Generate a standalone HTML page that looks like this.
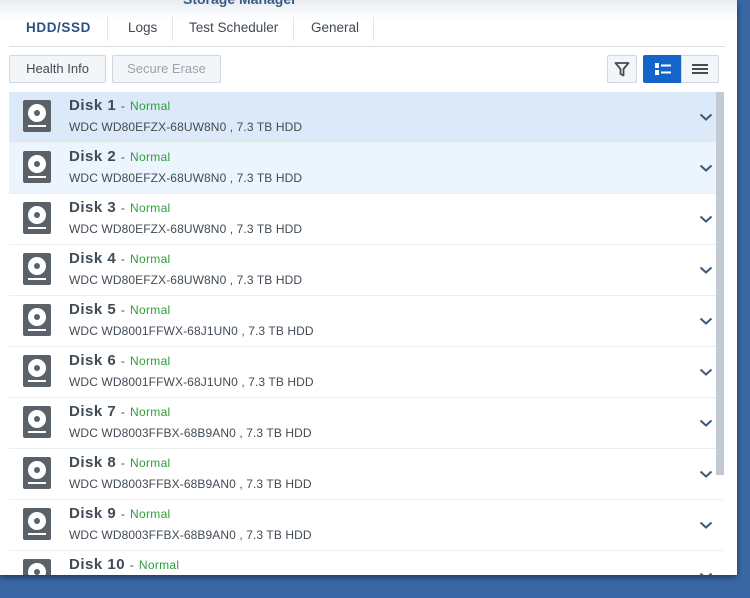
<!DOCTYPE html>
<html><head><style>
*{margin:0;padding:0;box-sizing:border-box}
body{width:750px;height:598px;background:#3a68a6;font-family:"Liberation Sans",Arial,sans-serif;position:relative;overflow:hidden}
.win{position:absolute;left:0;top:0;width:737px;height:575px;background:#fff;box-shadow:0 2px 6px rgba(0,0,0,.5);overflow:hidden}
.title{position:absolute;left:0;top:0;width:737px;height:20px;background:linear-gradient(#e8edf3,#fff)}
.title span{position:absolute;left:183px;top:-9px;font-size:14px;font-weight:bold;color:#3a5a80}
.tabs{position:absolute;left:9px;top:12px;width:716px;height:35px;border-bottom:1px solid #dde1e6}
.tab{position:absolute;top:8px;font-size:13.5px;color:#404852}
.sep{position:absolute;top:5px;width:1px;height:24px;background:#e2e5e9}
.btn{position:absolute;top:55px;height:28px;border:1px solid #cfd6de;border-radius:2px;background:#f3f6f9;font-size:13px;color:#414b55;text-align:center;line-height:26px}
.row{position:absolute;left:9px;width:714px;height:51px;border-bottom:1px solid #eceff2}
.ic{position:absolute;left:14px;top:8px;width:28px;height:32px;background:#5b6168;border-radius:2px}
.ic .c{position:absolute;left:5px;top:4px;width:18px;height:18px;border-radius:50%;background:#fff}
.ic .c:after{content:"";position:absolute;left:6px;top:6px;width:6px;height:6px;border-radius:50%;background:#5b6168}
.ic .l{position:absolute;left:5px;top:25px;width:18px;height:2px;background:#fff}
.t{position:absolute;left:60px;top:5px;font-size:15px;font-weight:bold;color:#414b55;letter-spacing:0.5px}
.t small{font-size:12px;font-weight:normal;color:#414b55}
.t i{font-style:normal;font-size:12px;font-weight:normal;color:#2e9e3a;letter-spacing:0.3px}
.s{position:absolute;left:60px;top:28px;font-size:12px;color:#414b55;letter-spacing:0.1px}
.ch{position:absolute;left:690px;top:20px}
.sb{position:absolute;left:716px;top:92px;width:8px;height:383px;background:#c3cad3}
</style></head><body>
<div class="win">
<div class="title"><span>Storage Manager</span></div>
<div class="tabs">
<div class="tab" style="left:17px;font-weight:bold;color:#2a5180;letter-spacing:0.6px">HDD/SSD</div>
<div class="sep" style="left:98px"></div>
<div class="tab" style="left:119px">Logs</div>
<div class="sep" style="left:163px"></div>
<div class="tab" style="left:180px">Test Scheduler</div>
<div class="sep" style="left:284px"></div>
<div class="tab" style="left:302px">General</div>
<div class="sep" style="left:364px"></div>
</div>
<div class="btn" style="left:9px;width:97px">Health Info</div>
<div class="btn" style="left:112px;width:109px;color:#9aa3ad">Secure Erase</div>
<div class="btn" style="left:607px;width:30px"><svg width="16" height="16" viewBox="0 0 16 16" style="margin-top:5px"><path d="M1.5 2h13L9.5 8v6.5l-3-1.5V8z" fill="none" stroke="#444b52" stroke-width="1.8" stroke-linejoin="round"/></svg></div>
<div class="btn" style="left:643px;width:39px;background:#1565c8;border-color:#1565c8;border-radius:2px 0 0 2px"><svg width="18" height="14" viewBox="0 0 18 14" style="margin-top:6px"><rect x="1" y="1" width="4" height="5" fill="#fff"/><rect x="1" y="8" width="4" height="5" fill="#fff"/><rect x="7" y="2.5" width="10" height="2" fill="#fff"/><rect x="7" y="9.5" width="10" height="2" fill="#fff"/></svg></div>
<div class="btn" style="left:681px;width:38px;border-radius:0 2px 2px 0"><svg width="16" height="12" viewBox="0 0 16 12" style="margin-top:7px"><rect x="0" y="1" width="16" height="2" fill="#444b52"/><rect x="0" y="5" width="16" height="2" fill="#444b52"/><rect x="0" y="9" width="16" height="2" fill="#444b52"/></svg></div>

<div class="row" style="top:92px;background:#dce9f8"><div class="ic"><div class="c"></div><div class="l"></div></div><div class="t">Disk 1 <small>-</small> <i>Normal</i></div><div class="s">WDC WD80EFZX-68UW8N0 , 7.3 TB HDD</div><svg class="ch" width="14" height="10"><path d="M1.5 2.5l5.5 5 5.5-5" fill="none" stroke="#3f587a" stroke-width="2"/></svg></div>
<div class="row" style="top:143px;background:#ecf4fd"><div class="ic"><div class="c"></div><div class="l"></div></div><div class="t">Disk 2 <small>-</small> <i>Normal</i></div><div class="s">WDC WD80EFZX-68UW8N0 , 7.3 TB HDD</div><svg class="ch" width="14" height="10"><path d="M1.5 2.5l5.5 5 5.5-5" fill="none" stroke="#3f587a" stroke-width="2"/></svg></div>
<div class="row" style="top:194px"><div class="ic"><div class="c"></div><div class="l"></div></div><div class="t">Disk 3 <small>-</small> <i>Normal</i></div><div class="s">WDC WD80EFZX-68UW8N0 , 7.3 TB HDD</div><svg class="ch" width="14" height="10"><path d="M1.5 2.5l5.5 5 5.5-5" fill="none" stroke="#3f587a" stroke-width="2"/></svg></div>
<div class="row" style="top:245px"><div class="ic"><div class="c"></div><div class="l"></div></div><div class="t">Disk 4 <small>-</small> <i>Normal</i></div><div class="s">WDC WD80EFZX-68UW8N0 , 7.3 TB HDD</div><svg class="ch" width="14" height="10"><path d="M1.5 2.5l5.5 5 5.5-5" fill="none" stroke="#3f587a" stroke-width="2"/></svg></div>
<div class="row" style="top:296px"><div class="ic"><div class="c"></div><div class="l"></div></div><div class="t">Disk 5 <small>-</small> <i>Normal</i></div><div class="s">WDC WD8001FFWX-68J1UN0 , 7.3 TB HDD</div><svg class="ch" width="14" height="10"><path d="M1.5 2.5l5.5 5 5.5-5" fill="none" stroke="#3f587a" stroke-width="2"/></svg></div>
<div class="row" style="top:347px"><div class="ic"><div class="c"></div><div class="l"></div></div><div class="t">Disk 6 <small>-</small> <i>Normal</i></div><div class="s">WDC WD8001FFWX-68J1UN0 , 7.3 TB HDD</div><svg class="ch" width="14" height="10"><path d="M1.5 2.5l5.5 5 5.5-5" fill="none" stroke="#3f587a" stroke-width="2"/></svg></div>
<div class="row" style="top:398px"><div class="ic"><div class="c"></div><div class="l"></div></div><div class="t">Disk 7 <small>-</small> <i>Normal</i></div><div class="s">WDC WD8003FFBX-68B9AN0 , 7.3 TB HDD</div><svg class="ch" width="14" height="10"><path d="M1.5 2.5l5.5 5 5.5-5" fill="none" stroke="#3f587a" stroke-width="2"/></svg></div>
<div class="row" style="top:449px"><div class="ic"><div class="c"></div><div class="l"></div></div><div class="t">Disk 8 <small>-</small> <i>Normal</i></div><div class="s">WDC WD8003FFBX-68B9AN0 , 7.3 TB HDD</div><svg class="ch" width="14" height="10"><path d="M1.5 2.5l5.5 5 5.5-5" fill="none" stroke="#3f587a" stroke-width="2"/></svg></div>
<div class="row" style="top:500px"><div class="ic"><div class="c"></div><div class="l"></div></div><div class="t">Disk 9 <small>-</small> <i>Normal</i></div><div class="s">WDC WD8003FFBX-68B9AN0 , 7.3 TB HDD</div><svg class="ch" width="14" height="10"><path d="M1.5 2.5l5.5 5 5.5-5" fill="none" stroke="#3f587a" stroke-width="2"/></svg></div>
<div class="row" style="top:551px"><div class="ic"><div class="c"></div><div class="l"></div></div><div class="t">Disk 10 <small>-</small> <i>Normal</i></div><div class="s">WDC WD8003FFBX-68B9AN0 , 7.3 TB HDD</div><svg class="ch" width="14" height="10"><path d="M1.5 2.5l5.5 5 5.5-5" fill="none" stroke="#3f587a" stroke-width="2"/></svg></div>
<div class="sb"></div>
</div>
</body></html>
